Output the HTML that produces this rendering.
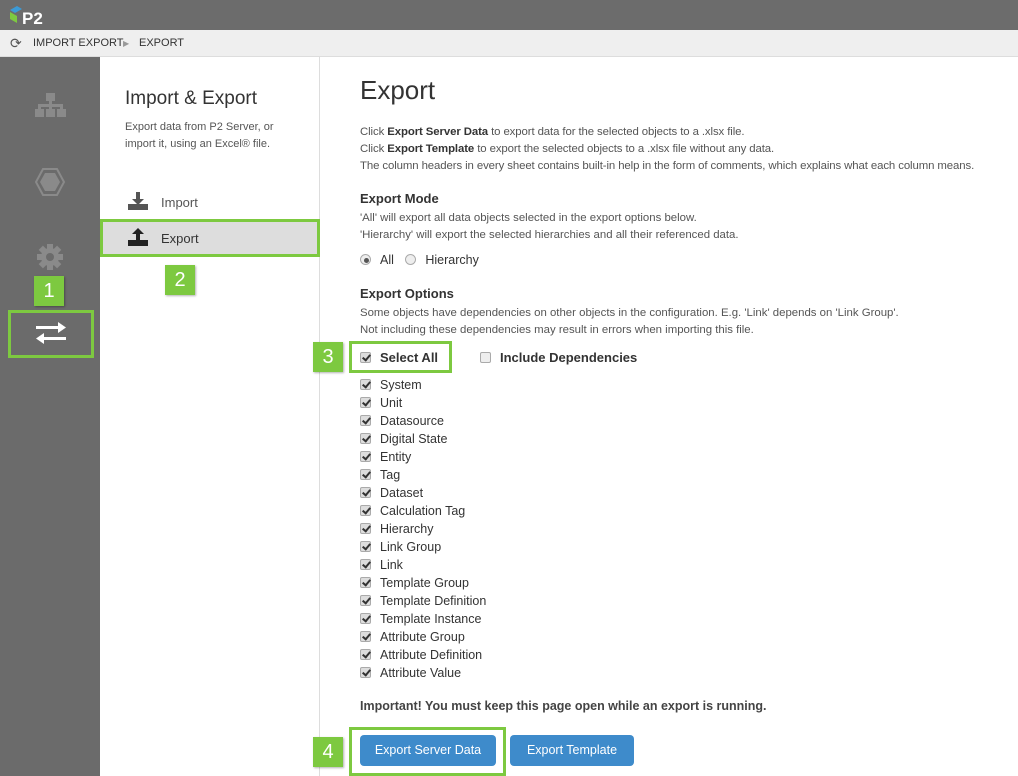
<!DOCTYPE html><html><head><style>
*{margin:0;padding:0;box-sizing:border-box}
body{width:1018px;height:776px;overflow:hidden;background:#fff;font-family:"Liberation Sans",sans-serif;color:#333;position:relative}
.a{position:absolute}
.top{left:0;top:0;width:1018px;height:30px;background:#6c6c6c}
.bc{left:0;top:30px;width:1018px;height:27px;background:#efefef;border-bottom:1px solid #ddd;font-size:11px;color:#333}
.side{left:0;top:57px;width:100px;height:719px;background:#6b6b6b}
.mid{left:100px;top:57px;width:220px;height:719px;border-right:1px solid #ddd}
.g{background:#7dc940;color:#fff;font-size:20px;text-align:center;line-height:30px;box-shadow:1px 1px 2px rgba(0,0,0,.3)}
.gb{border:3px solid #7dc940}
.t{font-size:11.4px;color:#555;line-height:17px}
.h{font-size:13px;font-weight:bold;color:#333}
.cb{display:inline-block;width:11px;height:11px;border:1px solid #aaa;background:#ddd;border-radius:2px;vertical-align:-1px;margin-right:9px;position:relative}
.cb.c::after{content:"";position:absolute;left:3px;top:0px;width:3px;height:6px;border:solid #333;border-width:0 2px 2px 0;transform:rotate(40deg)}
.list div{height:18px;font-size:12.5px;color:#333}
.btn{background:#3e8bcb;color:#fff;font-size:12.5px;border-radius:4px;text-align:center;line-height:31px;height:31px}
</style></head><body>
<div class="a top"><svg class="a" style="left:8px;top:4px" width="48" height="22"><polygon points="2,6 9,2 14,5 7,9" fill="#3c9ad6"/><polygon points="2,8 9,12 9,19 2,15" fill="#7dc940"/><text x="14" y="20" font-size="17" font-weight="bold" fill="#fff" font-family="Liberation Sans">P2</text></svg></div>
<div class="a bc"><span class="a" style="left:10px;top:5px;font-size:14px;color:#555">⟳</span><span class="a" style="left:33px;top:7px">IMPORT EXPORT</span><span class="a" style="left:123px;color:#999;font-size:8px;top:9px">▶</span><span class="a" style="left:139px;top:7px">EXPORT</span></div>
<div class="a side">
<svg class="a" style="left:34px;top:36px" width="33" height="28" fill="#8a8a8a"><rect x="12" y="0" width="9" height="8"/><rect x="15" y="7" width="3" height="5"/><rect x="4" y="11" width="25" height="3"/><rect x="4" y="11" width="3" height="6"/><rect x="26" y="11" width="3" height="6"/><rect x="15" y="11" width="3" height="6"/><rect x="1" y="16" width="9" height="8"/><rect x="12" y="16" width="9" height="8"/><rect x="23" y="16" width="9" height="8"/></svg>
<svg class="a" style="left:34px;top:110px" width="32" height="30"><polygon points="9,2 23,2 30,15 23,28 9,28 2,15" fill="none" stroke="#8a8a8a" stroke-width="2"/><polygon points="11,6 21,6 26,15 21,24 11,24 6,15" fill="#8a8a8a"/></svg>
<svg class="a" style="left:36px;top:186px" width="28" height="28" viewBox="-14 -14 28 28"><g fill="#8a8a8a"><circle r="9"/><rect x="-3" y="-13" width="6" height="26"/><rect x="-3" y="-13" width="6" height="26" transform="rotate(45)"/><rect x="-3" y="-13" width="6" height="26" transform="rotate(90)"/><rect x="-3" y="-13" width="6" height="26" transform="rotate(135)"/></g><circle r="4" fill="#6b6b6b"/></svg>
<div class="a g" style="left:34px;top:219px;width:30px;height:30px">1</div>
<div class="a gb" style="left:8px;top:253px;width:86px;height:48px"></div>
<svg class="a" style="left:34px;top:264px" width="34" height="26" fill="#fff"><rect x="2" y="5" width="24" height="3"/><polygon points="24,1 32,6.5 24,12"/><rect x="8" y="16" width="24" height="3"/><polygon points="10,12 2,17.5 10,23"/></svg>
</div>
<div class="a mid">
<div class="a" style="left:25px;top:31px;font-size:19px;color:#333">Import &amp; Export</div>
<div class="a t" style="left:25px;top:62px;width:180px;font-size:11px">Export data from P2 Server, or import it, using an Excel® file.</div>
<svg class="a" style="left:28px;top:135px" width="20" height="18" fill="#555"><rect x="8" y="0" width="4" height="8"/><polygon points="4,7 16,7 10,13"/><rect x="0" y="12" width="20" height="6"/></svg>
<div class="a" style="left:61px;top:138px;font-size:13px;color:#555">Import</div>
<div class="a" style="left:0;top:162px;width:220px;height:38px;background:#ddd;border:3px solid #7dc940"></div>
<svg class="a" style="left:28px;top:171px" width="20" height="18" fill="#222"><rect x="8" y="5" width="4" height="8"/><polygon points="4,6 16,6 10,0"/><rect x="0" y="12" width="20" height="6"/></svg>
<div class="a" style="left:61px;top:174px;font-size:13px;color:#333">Export</div>
<div class="a g" style="left:65px;top:208px;width:30px;height:30px">2</div>
</div>
<div class="a" style="left:360px;top:75px;font-size:26px;color:#333">Export</div>
<div class="a t" style="left:360px;top:124px;white-space:nowrap;letter-spacing:-0.1px">Click <b style="color:#333">Export Server Data</b> to export data for the selected objects to a .xlsx file.<br>Click <b style="color:#333">Export Template</b> to export the selected objects to a .xlsx file without any data.<br>The column headers in every sheet contains built-in help in the form of comments, which explains what each column means.</div>
<div class="a h" style="left:360px;top:191px">Export Mode</div>
<div class="a t" style="left:360px;top:210px;white-space:nowrap">'All' will export all data objects selected in the export options below.<br>'Hierarchy' will export the selected hierarchies and all their referenced data.</div>
<div class="a" style="left:360px;top:253px;font-size:12.5px"><span class="cb" style="border-radius:50%;background:#eee;position:relative"><span class="a" style="left:3px;top:3px;width:5px;height:5px;border-radius:50%;background:#555"></span></span>All <span class="cb" style="border-radius:50%;background:#eee;margin-left:8px"></span>Hierarchy</div>
<div class="a h" style="left:360px;top:286px">Export Options</div>
<div class="a t" style="left:360px;top:305px;white-space:nowrap">Some objects have dependencies on other objects in the configuration. E.g. 'Link' depends on 'Link Group'.<br>Not including these dependencies may result in errors when importing this file.</div>
<div class="a g" style="left:313px;top:342px;width:30px;height:30px">3</div>
<div class="a gb" style="left:349px;top:341px;width:103px;height:32px"></div>
<div class="a h" style="left:360px;top:350px"><span class="cb c"></span>Select All</div>
<div class="a h" style="left:480px;top:350px"><span class="cb" style="background:#eee"></span>Include Dependencies</div>
<div class="a list" style="left:360px;top:378px">
<div><span class="cb c"></span>System</div><div><span class="cb c"></span>Unit</div><div><span class="cb c"></span>Datasource</div><div><span class="cb c"></span>Digital State</div><div><span class="cb c"></span>Entity</div><div><span class="cb c"></span>Tag</div><div><span class="cb c"></span>Dataset</div><div><span class="cb c"></span>Calculation Tag</div><div><span class="cb c"></span>Hierarchy</div><div><span class="cb c"></span>Link Group</div><div><span class="cb c"></span>Link</div><div><span class="cb c"></span>Template Group</div><div><span class="cb c"></span>Template Definition</div><div><span class="cb c"></span>Template Instance</div><div><span class="cb c"></span>Attribute Group</div><div><span class="cb c"></span>Attribute Definition</div><div><span class="cb c"></span>Attribute Value</div>
</div>
<div class="a h" style="left:360px;top:699px;font-size:12.5px;color:#444">Important! You must keep this page open while an export is running.</div>
<div class="a g" style="left:313px;top:737px;width:30px;height:30px">4</div>
<div class="a gb" style="left:349px;top:727px;width:157px;height:49px"></div>
<div class="a btn" style="left:360px;top:735px;width:136px">Export Server Data</div>
<div class="a btn" style="left:510px;top:735px;width:124px">Export Template</div>
</body></html>
